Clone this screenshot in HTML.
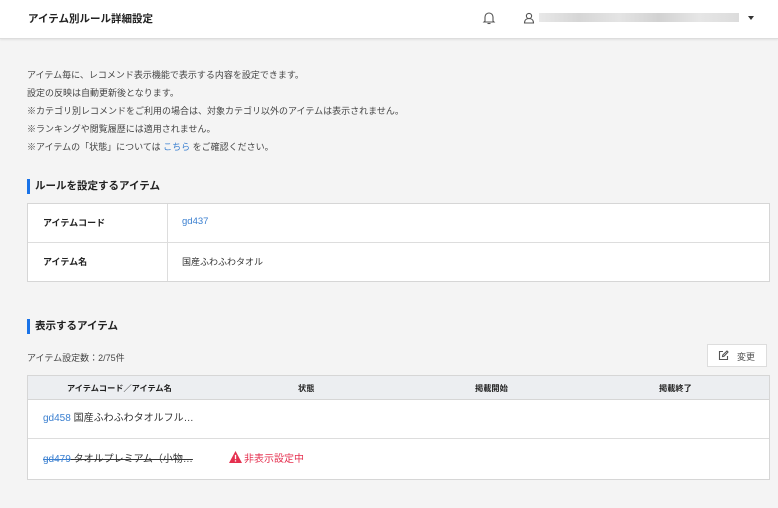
<!DOCTYPE html>
<html><head><meta charset="utf-8"><style>
*{margin:0;padding:0;box-sizing:border-box}
body{width:778px;height:508px;background:#f4f4f4;font-family:"Liberation Sans","Noto Sans CJK JP",sans-serif;color:#333;position:relative;overflow:hidden;font-size:9px}
.hd{position:absolute;left:0;top:0;width:778px;height:39px;background:#fff;border-bottom:1px solid #ddd;box-shadow:0 1px 2px rgba(0,0,0,.08)}
.hd .t{position:absolute;left:28px;top:11px;font-size:10.5px;font-weight:bold;color:#222}
.abs{position:absolute}
.p{position:absolute;left:27px;color:#444;font-size:9px}
a{color:#3a7fd0;text-decoration:none}
.sec{position:absolute;left:27px;border-left:3px solid #1a73e8;padding-left:5px;font-size:10.5px;font-weight:bold;color:#222;line-height:15px}
.box{position:absolute;left:27px;width:743px;background:#fff;border:1px solid #d6d6d6}
.r{position:absolute;left:0;width:741px;border-top:1px solid #ddd}
</style></head><body>
<div class="hd"><div class="t">アイテム別ルール詳細設定</div>
<svg class="abs" style="left:482px;top:11px" width="14" height="14" viewBox="0 0 14 14" fill="none" stroke="#555" stroke-width="1.1"><path d="M3 10V6a4 4 0 0 1 8 0v4l1 1H2z"/><path d="M5.5 12.5h3"/></svg>
<svg class="abs" style="left:523px;top:12px" width="12" height="12" viewBox="0 0 12 12" fill="none" stroke="#555" stroke-width="1.1"><circle cx="6" cy="4" r="2.6"/><path d="M1.5 11c0-3 2-4.5 4.5-4.5s4.5 1.5 4.5 4.5z"/></svg>
<div class="abs" style="left:539px;top:13px;width:200px;height:9px;background:linear-gradient(90deg,#e8e8e8,#d6d6d6 20%,#e4e4e4 40%,#d2d2d2 60%,#e6e6e6 80%,#dcdcdc)"></div>
<div class="abs" style="left:748px;top:16px;width:0;height:0;border-left:3.5px solid transparent;border-right:3.5px solid transparent;border-top:4px solid #333"></div>
</div>
<div class="p" style="top:68px">アイテム毎に、レコメンド表示機能で表示する内容を設定できます。</div>
<div class="p" style="top:86px">設定の反映は自動更新後となります。</div>
<div class="p" style="top:104px">※カテゴリ別レコメンドをご利用の場合は、対象カテゴリ以外のアイテムは表示されません。</div>
<div class="p" style="top:122px">※ランキングや閲覧履歴には適用されません。</div>
<div class="p" style="top:140px">※アイテムの「状態」については <a>こちら</a> をご確認ください。</div>
<div class="sec" style="top:179px">ルールを設定するアイテム</div>
<div class="box" style="top:203px;height:79px">
<div class="abs" style="left:139px;top:0;width:1px;height:77px;background:#ddd"></div>
<div class="abs" style="left:15px;top:12px;font-weight:bold;color:#222">アイテムコード</div>
<div class="abs" style="left:154px;top:12px;font-size:9.5px"><a>gd437</a></div>
<div class="r" style="top:38px"></div>
<div class="abs" style="left:15px;top:51px;font-weight:bold;color:#222">アイテム名</div>
<div class="abs" style="left:154px;top:51px">国産ふわふわタオル</div>
</div>
<div class="sec" style="top:319px">表示するアイテム</div>
<div class="p" style="top:351px">アイテム設定数：2/75件</div>
<div class="abs" style="left:707px;top:344px;width:60px;height:23px;background:#fff;border:1px solid #ddd;color:#555">
<svg class="abs" style="left:10px;top:5px" width="11" height="11" viewBox="0 0 11 11" fill="none" stroke="#555" stroke-width="1.1"><path d="M5 1.5H1.5v8h8V6"/><path d="M4.5 6.5l.3-1.5L9 1l1 1-4 4.2z"/></svg>
<span class="abs" style="left:29px;top:5px">変更</span></div>
<div class="box" style="top:375px;height:105px">
<div class="abs" style="left:0;top:0;width:741px;height:24px;background:#eceef1;border-bottom:1px solid #d6d6d6;font-weight:bold;font-size:8.2px;color:#222">
<span class="abs" style="left:39px;top:6px">アイテムコード／アイテム名</span>
<span class="abs" style="left:270px;top:6px">状態</span>
<span class="abs" style="left:447px;top:6px">掲載開始</span>
<span class="abs" style="left:631px;top:6px">掲載終了</span></div>
<div class="abs" style="left:15px;top:33px;font-size:10px"><a>gd458</a> 国産ふわふわタオルフル…</div>
<div class="r" style="top:62px"></div>
<div class="abs" style="left:15px;top:74px;font-size:10px;text-decoration:line-through"><a style="text-decoration:line-through">gd479</a> タオルプレミアム（小物…</div>
<svg class="abs" style="left:201px;top:75px" width="13" height="12" viewBox="0 0 12 11"><path d="M6 0L12 11H0z" fill="#e5304f"/><rect x="5.4" y="3.5" width="1.2" height="4" fill="#fff"/><rect x="5.4" y="8.5" width="1.2" height="1.2" fill="#fff"/></svg>
<div class="abs" style="left:216px;top:74px;font-size:10px;color:#e5304f">非表示設定中</div>
</div>
</body></html>
